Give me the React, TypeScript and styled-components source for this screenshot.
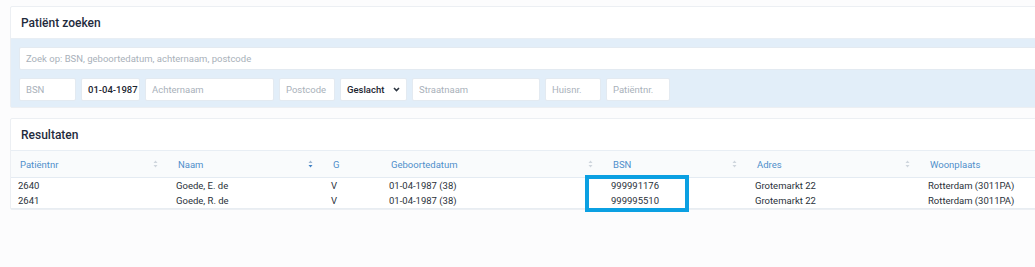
import React from "react";
import styled, { createGlobalStyle } from "styled-components";

const GlobalStyle = createGlobalStyle`
  html, body {
    margin: 0;
    padding: 0;
    background: #fcfcfd;
    overflow: hidden;
    font-family: Roboto, Inter, "Liberation Sans", sans-serif;
  }
`;

const Page = styled.div`
  width: 1035px;
  height: 267px;
  padding: 6px 0 0 10px;
  box-sizing: border-box;
  display: flex;
  flex-direction: column;
  gap: 10px;
  overflow: hidden;
`;

const Card = styled.div`
  width: 1060px;
  flex: none;
  background: #fff;
  border: 1px solid #eceff3;
  border-radius: 2px;
  box-sizing: border-box;
`;

const CardHeader = styled.div`
  height: 31px;
  display: flex;
  align-items: center;
  padding-left: 10px;
  font-size: 12px;
  font-weight: 500;
  color: #1f2b3d;
  border-bottom: 1px solid #e8eef4;
`;

const SearchArea = styled.div`
  background: #e2eef9;
  padding: 8px 0 6px 8px;
  display: flex;
  flex-direction: column;
  gap: 8px;
`;

const Field = styled.div<{ $w?: number; $filled?: boolean }>`
  width: ${(p) => (p.$w ? `${p.$w}px` : "auto")};
  flex: ${(p) => (p.$w ? "none" : "1")};
  height: 23px;
  background: #fff;
  border: 1px solid #e3eaf1;
  border-radius: 2px;
  box-sizing: border-box;
  display: flex;
  align-items: center;
  padding: 0 6px;
  white-space: nowrap;
  overflow: hidden;
  font-size: ${(p) => (p.$filled ? "9.5px" : "9.5px")};
  color: ${(p) => (p.$filled ? "#1c2430" : "#a9b1ba")};
  font-weight: ${(p) => (p.$filled ? 500 : 400)};
  justify-content: space-between;
`;

const FieldRow = styled.div`
  display: flex;
  gap: 5px;
`;

const TableWrap = styled.div`
  position: relative;
`;

const Grid = styled.div`
  display: grid;
  grid-template-columns: 158px 155px 58px 222px 144px 173px 1fr;
`;

const HeadCell = styled.div`
  height: 26px;
  background: #f9fbfc;
  border-bottom: 1px solid #e4ebf2;
  display: flex;
  align-items: center;
  justify-content: space-between;
  padding: 0 11px 0 9px;
  font-size: 9.5px;
  color: #4f8fcb;
`;

const Cell = styled.div<{ $last?: boolean }>`
  height: 15px;
  display: flex;
  align-items: center;
  padding-left: 7px;
  font-size: 9.5px;
  color: #2a313a;
  white-space: nowrap;
  border-bottom: ${(p) => (p.$last ? "1px solid #e8edf2" : "none")};
`;

const Highlight = styled.div`
  position: absolute;
  left: 574px;
  top: 24px;
  width: 104px;
  height: 37px;
  border: 4px solid #0ba0e2;
  box-sizing: border-box;
  pointer-events: none;
`;

const Sort = ({ active }: { active?: boolean }) => (
  <svg width="5" height="8" viewBox="0 0 5 8">
    <path d="M2.5 0.5 L4.5 3 L0.5 3 Z" fill={active ? "#9fb6d0" : "#cfd6dd"} />
    <path d="M2.5 7.5 L4.5 5 L0.5 5 Z" fill={active ? "#3f82c6" : "#cfd6dd"} />
  </svg>
);

const Chevron = () => (
  <svg width="7" height="5" viewBox="0 0 7 5">
    <path d="M1 1 L3.5 3.5 L6 1" stroke="#2b3440" strokeWidth="1.6" fill="none" />
  </svg>
);

const columns = [
  { label: "Patiëntnr", sort: true },
  { label: "Naam", sort: true, active: true },
  { label: "G" },
  { label: "Geboortedatum", sort: true },
  { label: "BSN", sort: true },
  { label: "Adres", sort: true },
  { label: "Woonplaats" },
];

const rows = [
  ["2640", "Goede, E. de", "V", "01-04-1987 (38)", "999991176", "Grotemarkt 22", "Rotterdam (3011PA)"],
  ["2641", "Goede, R. de", "V", "01-04-1987 (38)", "999995510", "Grotemarkt 22", "Rotterdam (3011PA)"],
];

export default function App() {
  return (
    <>
      <GlobalStyle />
      <Page>
        <Card>
          <CardHeader>Patiënt zoeken</CardHeader>
          <SearchArea>
            <FieldRow>
              <Field>Zoek op: BSN, geboortedatum, achternaam, postcode</Field>
            </FieldRow>
            <FieldRow>
              <Field $w={57}>BSN</Field>
              <Field $w={59} $filled>01-04-1987</Field>
              <Field $w={129}>Achternaam</Field>
              <Field $w={56}>Postcode</Field>
              <Field $w={67} $filled>
                Geslacht <Chevron />
              </Field>
              <Field $w={128}>Straatnaam</Field>
              <Field $w={56}>Huisnr.</Field>
              <Field $w={64}>Patiëntnr.</Field>
            </FieldRow>
          </SearchArea>
        </Card>
        <Card>
          <CardHeader>Resultaten</CardHeader>
          <TableWrap>
            <Grid>
              {columns.map((c) => (
                <HeadCell key={c.label}>
                  <span>{c.label}</span>
                  {c.sort && <Sort active={c.active} />}
                </HeadCell>
              ))}
              {rows.map((r, i) =>
                r.map((v, j) => (
                  <Cell key={`${i}-${j}`} $last={i === rows.length - 1}>
                    {v}
                  </Cell>
                ))
              )}
            </Grid>
            <Highlight />
          </TableWrap>
        </Card>
      </Page>
    </>
  );
}
